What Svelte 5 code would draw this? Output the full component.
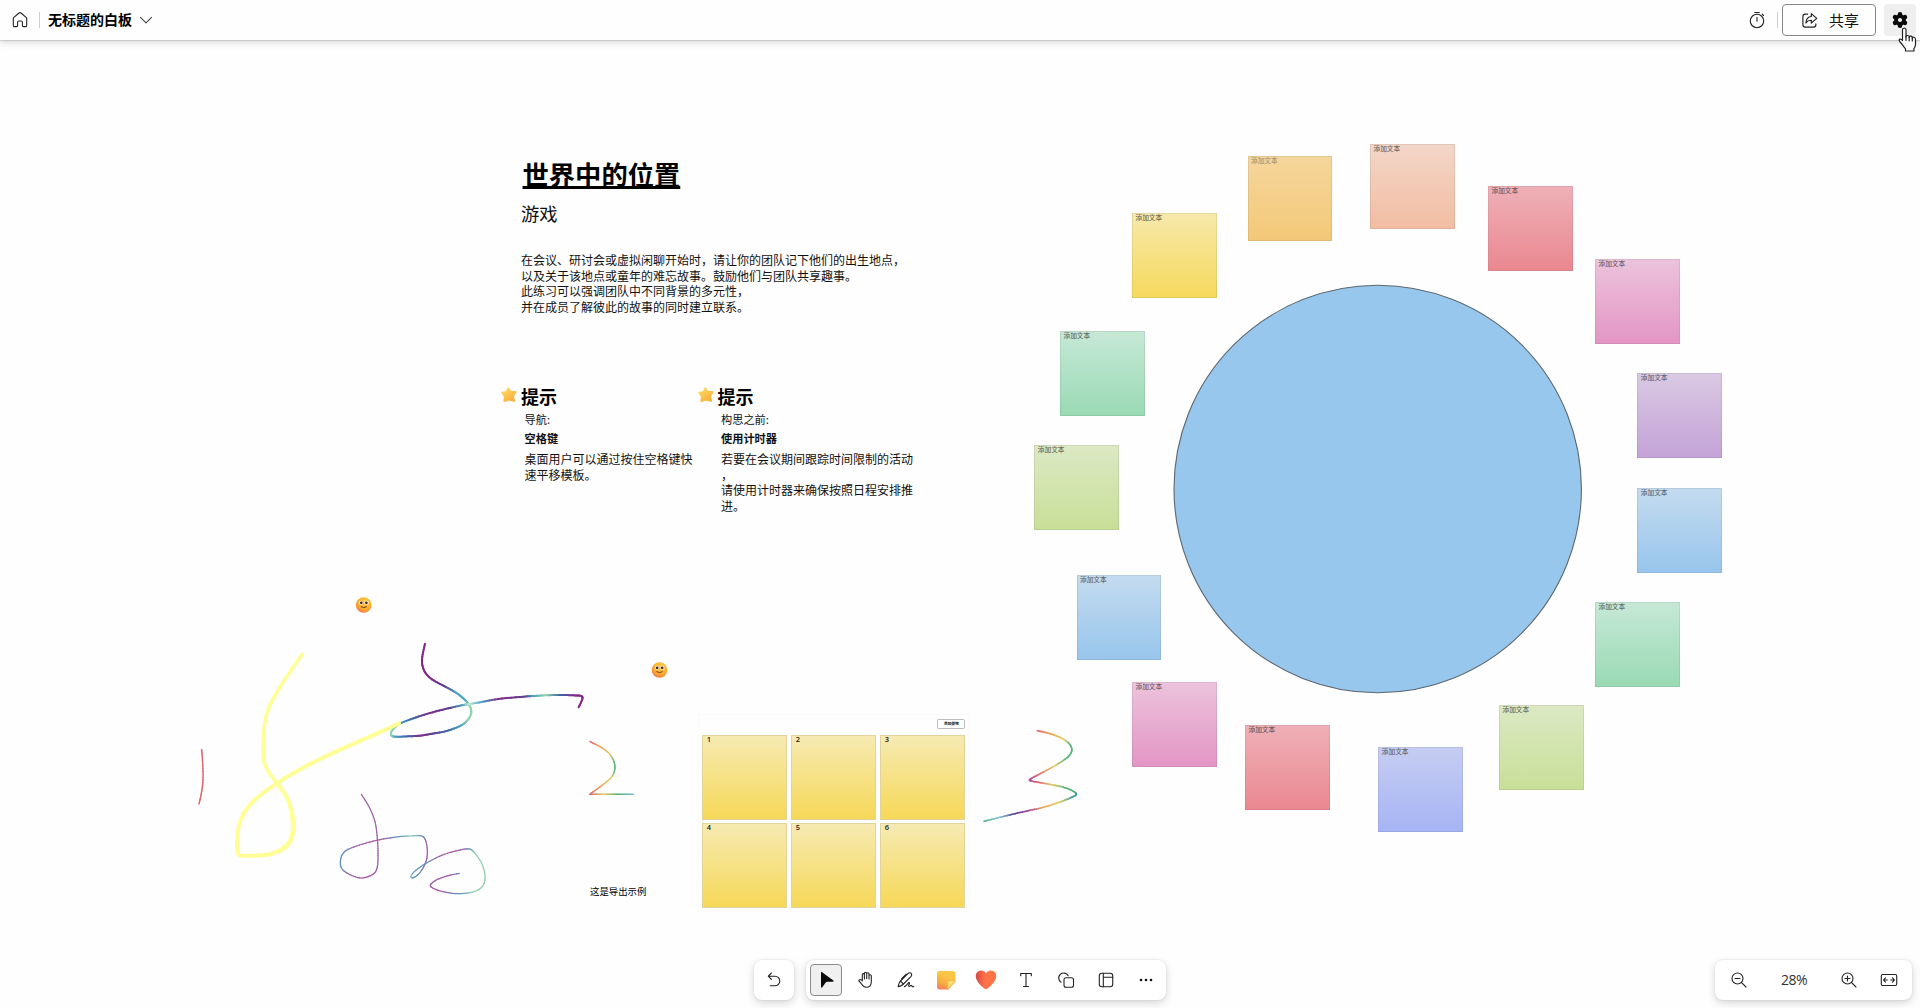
<script>
  const palette = {
    yellow: ['#f6e9ab', '#f6d95c'],
    orange: ['#f5d69c', '#f4c878'],
    peach: ['#f3d6c8', '#f2bda2'],
    red: ['#efb0b7', '#ea8790'],
    pink: ['#ecc3dc', '#e395c4'],
    purple: ['#dac9e3', '#c4a2d7'],
    blue: ['#c4dbef', '#97c5ec'],
    green: ['#c6e8d6', '#99dab4'],
    lime: ['#dce9c4', '#c8df98'],
    indigo: ['#c6cdf2', '#a6b4f4']
  };

  const notes = [
    ['yellow', 1132, 213], ['orange', 1247.5, 155.8], ['peach', 1370, 144],
    ['red', 1488, 186], ['pink', 1595, 259], ['purple', 1637.3, 373],
    ['blue', 1637.3, 488], ['green', 1595, 602], ['lime', 1499, 705],
    ['indigo', 1378.3, 747], ['red', 1245, 724.5], ['pink', 1132, 682],
    ['blue', 1076.5, 574.8], ['lime', 1034.3, 445], ['green', 1060, 331]
  ];

  // Ink strokes: points are in third-pixels from the stroke's origin, with a colour at each.
  const P = '#842a8c', B = '#3f62a8', C = '#4aa3c4', G = '#8fd4ac', V = '#5b3f8f', L = '#c3e6cf';
  const p = '#9a62a8', b = '#5f8fc0', g = '#93cfae', m = '#a85aa5';
  const R = '#e0656f', O = '#f0a452', Y = '#e3cd63', N = '#58b47c', T = '#3f9fa0', S = '#7fc4e0', M = '#b04ea0';
  const inks = [
    { o: [180, 580], w: 1.4, pts: [[65, 508, R], [68, 550, R], [69, 600, R], [64, 640, R], [57, 672, R]] },
    { o: [180, 580], w: 2, pts: [[735, 191, P], [727, 230, P], [727, 255, P], [736, 278, P], [756, 298, P], [792, 318, V], [828, 338, C], [852, 357, C], [868, 376, G], [874, 398, G], [863, 420, G], [842, 437, C], [800, 453, B], [757, 461, V], [720, 467, P], [685, 469, B], [645, 470, C], [634, 465, G], [637, 450, G], [660, 431, C], [700, 415, B], [750, 399, P], [805, 385, V], [845, 376, C], [868, 372, L], [905, 366, C], [955, 357, P], [1030, 350, V], [1060, 348, C], [1095, 346, G], [1140, 345, B], [1180, 346, P], [1203, 348, P], [1207, 357, P], [1196, 382, P]] },
    { o: [180, 580], w: 1.2, pts: [[544, 643, p], [568, 682, p], [585, 725, p], [592, 775, p], [594, 820, p], [592, 860, p], [580, 882, m], [545, 894, m], [510, 884, p], [485, 865, b], [482, 838, b], [495, 814, b], [530, 798, m], [590, 781, m], [650, 771, b], [690, 768, g], [725, 768, b], [738, 785, p], [742, 820, p], [736, 850, p], [718, 880, b], [700, 893, b], [693, 889, g], [704, 874, b], [735, 852, b], [785, 826, m], [835, 811, m], [868, 807, b], [885, 820, g], [905, 850, g], [915, 885, g], [910, 915, g], [885, 934, g], [835, 941, b], [785, 934, m], [755, 922, m], [753, 912, p], [773, 898, p], [805, 887, m], [838, 880, b]] },
    { o: [180, 580], w: 1.4, pts: [[1230, 485, R], [1260, 500, O], [1287, 520, Y], [1302, 545, N], [1304, 570, N], [1293, 593, Y], [1265, 617, O], [1230, 642, R]] },
    { o: [180, 580], w: 1.5, pts: [[1230, 643, R], [1270, 643, Y], [1310, 643, N], [1360, 643, S]] },
    { o: [690, 700], w: 1.6, pts: [[1042, 92, R], [1080, 101, O], [1118, 116, Y], [1140, 134, N], [1145, 154, N], [1130, 174, N], [1095, 197, Y], [1045, 224, R], [1022, 237, M], [1021, 242, M], [1045, 247, R], [1085, 254, Y], [1125, 263, N], [1150, 274, N], [1159, 283, T], [1145, 292, T], [1110, 306, Y], [1060, 322, O], [1020, 331, M], [975, 341, V], [930, 352, S], [882, 364, N]] }
  ];

  const at = (a, q, c, d, t) =>
    0.5 * (2 * q + (c - a) * t + (2 * a - 5 * q + 4 * c - d) * t * t + (3 * q - a - 3 * c + d) * t * t * t);
  const rgb = (h) => [1, 3, 5].map((i) => parseInt(h.slice(i, i + 2), 16));

  function segments({ o, w, pts }) {
    const out = [];
    const steps = 6;
    for (let i = 0; i < pts.length - 1; i++) {
      const q = [pts[Math.max(i - 1, 0)], pts[i], pts[i + 1], pts[Math.min(i + 2, pts.length - 1)]];
      const from = rgb(q[1][2]);
      const to = rgb(q[2][2]);
      for (let s = 0; s < steps; s++) {
        const pos = (t, k) => o[k] + at(q[0][k], q[1][k], q[2][k], q[3][k], t) / 3;
        const a = s / steps;
        const e = (s + 1) / steps;
        out.push({
          x1: pos(a, 0), y1: pos(a, 1), x2: pos(e, 0), y2: pos(e, 1), w,
          c: `rgb(${from.map((v, k) => Math.round(v + (to[k] - v) * a)).join(',')})`
        });
      }
    }
    return out;
  }
  const lines = inks.flatMap(segments);
</script>

{#snippet smiley(x, y)}
  <g transform="translate({x} {y})">
    <circle r="7.8" fill="url(#face)" />
    <circle cx="-2.7" cy="-2.3" r="2" fill="#fff" />
    <circle cx="2.9" cy="-2.3" r="2" fill="#fff" />
    <circle cx="-2.4" cy="-2.2" r="1.4" fill="#43283b" />
    <circle cx="2.7" cy="-2.2" r="1.4" fill="#43283b" />
    <path d="M-2.6 1.8Q0 3.6 2.8 1.8" fill="none" stroke="#6b3a25" stroke-width="1" stroke-linecap="round" />
  </g>
{/snippet}

{#snippet star()}
  <svg class="star" viewBox="0 0 16 16">
    <defs>
      <linearGradient id="gold" x1="0" y1="0" x2=".6" y2="1"><stop offset="0" stop-color="#ffdc66" /><stop offset="1" stop-color="#f9b13c" /></linearGradient>
    </defs>
    <path d="M7.3 1.2 9.4 4.8 14.6 5 11.9 9.2 13.2 14 8.1 12.6 3.3 14.2 3.8 9.4 1.2 5.6 5.6 4.8Z" fill="url(#gold)" stroke="url(#gold)" stroke-width="1.8" stroke-linejoin="round" />
  </svg>
{/snippet}

<div class="app">
  <div class="board">
    <svg class="ink" viewBox="0 0 1920 1008">
      <defs>
        <radialGradient id="face" cx=".6" cy=".3" r=".8"><stop offset="0" stop-color="#ffd04a" /><stop offset=".6" stop-color="#fba92c" /><stop offset="1" stop-color="#ef6a4c" /></radialGradient>
      </defs>
      <circle class="world" cx="1377.7" cy="489" r="203.7" />
      {#each lines as l}
        <line x1={l.x1} y1={l.y1} x2={l.x2} y2={l.y2} stroke={l.c} stroke-width={l.w} stroke-linecap="round" />
      {/each}
      <g class="marker" transform="translate(180 580) scale(.33333)">
        <path stroke-width="11" d="M367 223C330 275 290 330 269 377C250 420 250 470 249 520C250 560 268 580 291 610" />
        <path stroke-width="10" d="M291 610C325 650 335 675 341 725C344 785 325 800 300 815" />
        <path stroke-width="12" d="M291 610C325 650 333 675 338 725C343 780 320 800 297 812C270 828 230 828 180 827C168 822 170 790 173 760C177 690 235 645 291 610C370 555 490 505 590 461Q630 443 657 430" />
      </g>
      {@render smiley(363.7, 605)}
      {@render smiley(659.5, 670)}
    </svg>

    <h1>世界中的位置</h1>
    <p class="subtitle">游戏</p>
    <p class="intro">在会议、研讨会或虚拟闲聊开始时，请让你的团队记下他们的出生地点，<br />以及关于该地点或童年的难忘故事。鼓励他们与团队共享趣事。<br />此练习可以强调团队中不同背景的多元性，<br />并在成员了解彼此的故事的同时建立联系。</p>

    <section class="tip first">
      <h2>{@render star()}提示</h2>
      <p class="label">导航:</p>
      <p class="label strong">空格键</p>
      <p class="detail">桌面用户可以通过按住空格键快<br />速平移模板。</p>
    </section>
    <section class="tip second">
      <h2>{@render star()}提示</h2>
      <p class="label">构思之前:</p>
      <p class="label strong">使用计时器</p>
      <p class="detail">若要在会议期间跟踪时间限制的活动<br />，<br />请使用计时器来确保按照日程安排推<br />进。</p>
    </section>

    {#each notes as [hue, x, y]}
      <div class="note" style="left:{x}px;top:{y}px;--a:{palette[hue][0]};--b:{palette[hue][1]}"><span class:faint={hue === 'orange'}>添加文本</span></div>
    {/each}

    <div class="frame">
      <div class="chip">添加便笺</div>
      <div class="grid">
        {#each [1, 2, 3, 4, 5, 6] as n}<div class="cell">{n}</div>{/each}
      </div>
    </div>
    <p class="sample">这是导出示例</p>
  </div>

  <header>
    <svg class="i20" viewBox="0 0 20 20"><path d="M9 3 3.9 7.4Q3.3 8 3.3 8.8V15.5Q3.3 16.6 4.4 16.6H6.6Q7.6 16.6 7.6 15.6V12.2Q7.6 11 8.8 11H11.2Q12.4 11 12.4 12.2V15.6Q12.4 16.6 13.4 16.6H15.6Q16.7 16.6 16.7 15.5V8.8Q16.7 8 16.1 7.4L11 3Q10 2.2 9 3Z" /></svg>
    <i class="rule"></i>
    <strong>无标题的白板</strong>
    <svg class="chev" viewBox="0 0 14 14"><path d="M1.5 4.3 7 9.8 12.5 4.3" /></svg>
    <div class="spacer"></div>
    <svg class="i20" viewBox="0 0 20 20"><circle cx="10" cy="11" r="6.7" /><path d="M10 7.2V11.2M7.8 2.5H12.3M15.2 4.2 16.5 5.5" /></svg>
    <i class="rule last"></i>
    <button class="share">
      <svg class="i16" viewBox="0 0 16 16"><path d="M6.2 2H4Q1.8 2 1.8 4.2V12Q1.8 14.2 4 14.2H11.8Q14 14.2 14 12V11.2M9.7 1.5V4.2Q5 4.5 4.6 10.3Q6.5 7.7 9.7 7.8V10.5L14.8 6Z" /></svg>
      <span>共享</span>
    </button>
    <button class="gear">
      <svg viewBox="0 0 20 20">
        <g stroke="#0b0b0b" stroke-width="4.6" stroke-linecap="round"><path d="M10 4.3V15.7M5.1 7.2 14.9 12.8M14.9 7.2 5.1 12.8" /></g>
        <circle cx="10" cy="10" r="5.8" fill="#0b0b0b" stroke="none" /><circle cx="10" cy="10" r="2.1" fill="#efefef" stroke="none" />
      </svg>
    </button>
  </header>

  <footer>
    <div class="bars">
      <div class="bar"><button><svg class="i20" viewBox="0 0 20 20"><path d="M7.4 3 4.3 6.2 7.4 9.4M4.5 6.2H11A4.8 4.8 0 0 1 11 15.8H6.3" /></svg></button></div>
      <div class="bar tools">
        <button class="active"><svg class="i20" viewBox="0 0 20 20"><path class="solid" d="M5 2.2Q5 1.4 5.7 2L17.4 10.6Q18.3 11.6 16.8 11.7H11.5Q10.400 11.7 9.700 12.6L6.300 17.3Q5.100 18.400 5 17Z" /></svg></button>
        <button><svg class="i20" viewBox="0 0 20 20"><path d="M6.3 10.5V4.8Q6.3 3.6 7.3 3.6T8.4 4.8V9M8.4 8.5V3.5Q8.4 2.3 9.5 2.3T10.7 3.5V8.5M10.7 8V3.8Q10.7 2.7 11.8 2.7T13 3.9V9M13 9V5.8Q13 4.7 14.1 4.7T15.300 5.9V11.5C15.3 15.5 13.3 17.3 10.3 17.3C7.5 17.3 6.5 15.500 5.3 13.7L2.8 10.8Q2.9 9.6 4.2 9.5Q5.3 9.6 6.3 10.900" /></svg></button>
        <button><svg class="i20" viewBox="0 0 20 20"><path d="M4 11.500 11.800 3.700Q13.700 2 15.200 3.300Q16.500 4.800 14.900 6.600L7 14.500Q4.800 16.200 2.200 16.800Q2.700 13.500 4 11.500ZM4 11.500Q6.600 11.800 7 14.500M11.300 4.200 10.300 4.200 5.600 8.600M8.500 16.700Q11 14.800 12.500 12.800Q13.800 12 13.500 13.600L12.600 15.400Q12.600 17 14.300 15.900Q15.700 14.900 15.900 16Q16.300 17.200 17.800 16.600" /></svg></button>
        <button>
          <svg class="i20" viewBox="0 0 20 20">
            <defs><linearGradient id="sticky" x1=".7" y1="0" x2=".3" y2="1"><stop offset=".3" stop-color="#fbc646" /><stop offset=".75" stop-color="#f6a642" /><stop offset="1" stop-color="#f3835f" /></linearGradient></defs>
            <path d="M3.8 1H17Q19.5 1 19.5 3.5V11.5L12.5 19.500H3.8Q1 19.500 1 16.500V3.5Q1 1 3.8 1Z" fill="url(#sticky)" stroke="none" /><path d="M19.3 10.8 11.7 19.300V12.300Q11.7 10.6 13.3 10.6Z" fill="#ffe06d" stroke="#f2ab50" stroke-width=".7" />
          </svg>
        </button>
        <button>
          <svg class="heart" viewBox="0 0 22 20">
            <defs><linearGradient id="love" x1="0" x2=".5"><stop offset="0" stop-color="#d2483f" /><stop offset=".7" stop-color="#f9694a" /><stop offset="1" stop-color="#ff7548" /></linearGradient></defs>
            <path d="M11 3.2C13-.3 18.5-.2 20.6 3.2C22.8 8 19 14 12.2 18.8Q11 19.7 9.8 18.800C3 14-.8 8 1.4 3.2C3.5-.2 9-.3 11 3.2Z" fill="url(#love)" stroke="none" />
          </svg>
        </button>
        <button><svg class="i20" viewBox="0 0 20 20"><path d="M4.700 5.700V3.500H15.300V5.700M10 3.500V16.500M7.500 16.500H12.500" /></svg></button>
        <button><svg class="i20" viewBox="0 0 20 20"><path d="M5 12.2A5 5 0 1 1 12.2 5.8" /><rect x="8" y="7.8" width="9.5" height="9.5" rx="2" /></svg></button>
        <button><svg class="i20" viewBox="0 0 20 20"><rect x="3.3" y="3.3" width="13.4" height="13.4" rx="2.5" /><path d="M7.3 3.3V16.7M7.3 7.3H16.7" /></svg></button>
        <button><svg class="i20 dots" viewBox="0 0 20 20"><circle cx="5" cy="10" r="1.300" /><circle cx="10" cy="10" r="1.300" /><circle cx="15" cy="10" r="1.300" /></svg></button>
      </div>
    </div>
    <div class="bar zoom">
      <button><svg class="i20" viewBox="0 0 20 20"><circle cx="8.5" cy="8.5" r="5.5" /><path d="M12.6 12.6 17 17M6 8.5H11" /></svg></button>
      <span>28%</span>
      <button><svg class="i20" viewBox="0 0 20 20"><circle cx="8.5" cy="8.5" r="5.5" /><path d="M12.6 12.6 17 17M6 8.5H11M8.5 6V11" /></svg></button>
      <button><svg class="i20" viewBox="0 0 20 20"><rect x="2.3" y="4.5" width="15.4" height="11" rx="1.5" /><path d="M6.5 7.8 4.5 10 6.5 12.2M4.7 10H8.3M13.5 7.8 15.5 10 13.5 12.2M15.3 10H11.7" /></svg></button>
    </div>
  </footer>

  <svg class="pointer" viewBox="0 0 20 26"><path d="M5.800 1.200Q7.600.8 8 2.700V10Q8.200 8.300 9.800 8.500T11.300 10.300Q11.600 8.800 13 9.200T14.400 11Q14.700 9.900 16 10.300T17.500 12.300V17.500Q17.300 20 15.900 21.600V24H7.500V21.800Q6 20 4.500 17.800L1.700 14.500Q.6 12.800 1.900 12.100Q3.200 11.700 4.500 13.500V2.700Q4.600 1.400 5.800 1.200Z" /><path d="M8 9.5V13.5M11.2 10V13.8M14.3 11V14" /></svg>
</div>

<style>
  :global(body) { margin: 0; overflow: hidden; }
  .app {
    position: relative; display: flex; flex-direction: column; justify-content: space-between;
    height: 1008px; background: #fefefe; color: #111; overflow: hidden;
    font-family: "Noto Sans CJK SC", sans-serif;
  }
  svg { display: block; fill: none; stroke: #222; stroke-width: 1.1; stroke-linecap: round; stroke-linejoin: round; }
  .i20 { width: 20px; height: 20px; }
  .i16 { width: 17px; height: 17px; }
  button { padding: 0; border: 0; background: none; font: inherit; color: inherit; }
  p, h1, h2 { margin: 0; font-weight: 400; white-space: nowrap; }

  header {
    position: relative; display: flex; align-items: center; height: 40px; padding: 0 4px 0 10px; box-sizing: border-box;
    background: #fefefe; box-shadow: 0 1px 1px rgba(0, 0, 0, .12), 0 2px 8px rgba(0, 0, 0, .16);
  }
  .rule { width: 1px; height: 16px; margin: 0 8px 0 9px; background: #cfcfcf; }
  header strong { padding-bottom: 1px; font-size: 14px; line-height: 19px; color: #000; }
  .chev { width: 14px; height: 14px; margin-left: 7px; stroke: #444; }
  .spacer { flex: 1; }
  .last { margin: 0 4px 0 10px; }
  .share {
    display: flex; align-items: center; gap: 11px; width: 94px; height: 32px; padding-left: 18px; box-sizing: border-box;
    border: 1px solid #868686; border-radius: 4px; font-size: 15px; line-height: 20px;
  }
  .gear { display: flex; align-items: center; justify-content: center; width: 32px; height: 32px; margin-left: 8px; border-radius: 4px; background: #efefef; }
  .gear svg { width: 20px; height: 20px; }
  .pointer { position: absolute; left: 1897.5px; top: 27px; width: 20px; height: 26px; fill: #fff; stroke: #222; stroke-width: 1.2; }

  .board { position: absolute; inset: 0; }
  .ink { position: absolute; inset: 0; width: 1920px; height: 1008px; }
  .world { fill: #98c7ee; stroke: #5d6870; stroke-width: 1.1; }
  .marker { stroke: #ffff96; }
  .ink circle:not(.world) { stroke: none; }

  h1 { position: absolute; left: 522.5px; top: 155px; font-size: 26.3px; line-height: 38px; font-weight: 700; color: #000; text-decoration: underline; text-decoration-thickness: 2.5px; text-underline-offset: 1px; text-decoration-skip-ink: none; }
  .subtitle { position: absolute; left: 521px; top: 199px; font-size: 18.3px; line-height: 28px; }
  .intro { position: absolute; left: 521px; top: 252px; font-size: 12px; line-height: 15.7px; }

  .tip { position: absolute; top: 382px; display: flex; flex-direction: column; }
  .first { left: 501px; }
  .second { left: 697.5px; }
  h2 { display: flex; gap: 4px; font-size: 18px; line-height: 28px; font-weight: 700; color: #000; }
  .star { width: 16px; height: 16px; margin-top: 5px; stroke: none; }
  .label { margin-left: 23.5px; font-size: 11.2px; line-height: 19.3px; }
  .strong { font-weight: 700; }
  .detail { margin: 2px 0 0 23.5px; font-size: 12px; line-height: 15.9px; }

  .note {
    position: absolute; width: 84.5px; height: 85px; box-sizing: border-box; padding: 0 0 0 2.5px;
    border: 1px solid rgba(90, 90, 90, .12); background: linear-gradient(var(--a), var(--b)) border-box;
    font-size: 6.700px; line-height: 7px; font-weight: 500; color: rgba(60, 60, 60, .75);
  }
  .note span { display: block; }
  .faint { opacity: .6; }
  .frame {
    position: absolute; left: 697.5px; top: 713.5px; display: flex; flex-direction: column; align-items: flex-end; gap: 6px;
    padding: 4.5px 3.8px 3px; border: 1px solid #fafafa;
  }
  .chip {
    width: 28px; height: 10px; box-sizing: border-box; border: 1px solid #bbb; border-radius: 1.5px;
    font-size: 3.8px; line-height: 8px; font-weight: 700; text-align: center;
  }
  .grid { display: grid; grid-template-columns: repeat(3, 85px); grid-auto-rows: 85px; gap: 3px 4px; }
  .cell {
    box-sizing: border-box; border: 1px solid #e2d39a; padding-left: 3.5px; background: linear-gradient(#f6eab2, #f6d858);
    font: 600 7.5px/7px "Open Sans", "Noto Sans CJK SC", sans-serif; color: #1b1b1b;
  }
  .sample { position: absolute; left: 590px; top: 885px; font-size: 9.4px; line-height: 13px; color: #000; }

  footer { position: relative; display: grid; grid-template-columns: 1fr auto 1fr; padding: 0 8px 8px; }
  .bars { grid-column: 2; display: flex; gap: 12px; }
  .bar {
    display: flex; align-items: center; gap: 8px; height: 40px; padding: 0 4px; box-sizing: border-box; background: #fff;
    border-radius: 8px; box-shadow: 0 0 2px rgba(0, 0, 0, .12), 0 3px 8px rgba(0, 0, 0, .16);
  }
  .bar button { display: flex; align-items: center; justify-content: center; width: 32px; height: 32px; box-sizing: border-box; border-radius: 4px; }
  .bar .active { border: 1px solid #8a8a8a; background: #f0f0f0; }
  .solid { fill: #0b0b0b; stroke: none; }
  .heart { width: 22px; height: 20px; }
  .dots { fill: #111; stroke: none; }
  .zoom { justify-self: end; width: 197px; padding: 0 7px 0 8px; }
  .zoom span { flex: 1; text-align: center; font: 14px/20px "Open Sans", "Noto Sans", sans-serif; letter-spacing: -.5px; color: #333; }
</style>
